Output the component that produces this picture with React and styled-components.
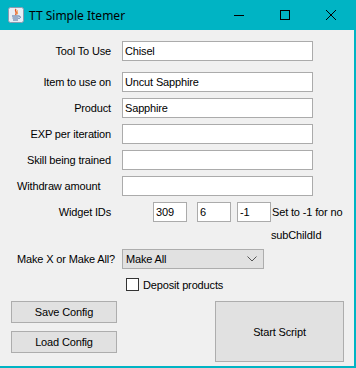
import React from 'react';
import styled, { createGlobalStyle } from 'styled-components';

const GlobalStyle = createGlobalStyle`
  html, body {
    margin: 0;
    padding: 0;
    background: #f0f0f0;
  }
`;

const Window = styled.div`
  width: 356px;
  height: 368px;
  box-sizing: border-box;
  border-right: 2px solid #00b4c4;
  border-bottom: 2px solid #00b4c4;
  background: #f0f0f0;
  font-family: "Liberation Sans", Arial, sans-serif;
  font-size: 11px;
  letter-spacing: -0.15px;
  color: #000;
  display: flex;
  flex-direction: column;
`;

const TitleBar = styled.div`
  height: 30px;
  flex-shrink: 0;
  background: #00b4c4;
  display: flex;
  align-items: center;
  padding-left: 8px;
`;

const TitleText = styled.span`
  font-family: "Noto Sans", "Liberation Sans", sans-serif;
  font-size: 12px;
  letter-spacing: 0;
  margin-left: 5px;
  color: #000;
  flex: 1;
`;

const Controls = styled.div`
  display: flex;
  height: 30px;
`;

const ControlButton = styled.div`
  width: 46px;
  height: 30px;
  display: flex;
  align-items: center;
  justify-content: center;
`;

const Content = styled.div`
  flex: 1;
  display: flex;
  flex-direction: column;
  padding-top: 11px;
`;

const Row = styled.div`
  display: flex;
  align-items: center;
  height: 20px;
  margin-top: ${(p) => p.$gap || 0}px;
`;

const Label = styled.div`
  width: ${(p) => (p.$left ? 86 : 94)}px;
  margin-left: 17px;
  margin-right: ${(p) => (p.$left ? 19 : 11)}px;
  text-align: ${(p) => (p.$left ? 'left' : 'right')};
  white-space: nowrap;
`;

const TextField = styled.div`
  box-sizing: border-box;
  width: ${(p) => p.$w || 191}px;
  height: 20px;
  background: #fff;
  border: 1px solid #ababab;
  padding-left: 2px;
  display: flex;
  align-items: center;
  margin-right: ${(p) => p.$mr || 0}px;
`;

const WidgetFields = styled.div`
  display: flex;
  align-items: center;
  margin-left: 31px;
`;

const Note = styled.span`
  margin-left: 1px;
  white-space: nowrap;
`;

const NoteLine = styled.div`
  height: 18px;
  display: flex;
  align-items: center;
  margin-top: 4px;
  padding-left: 271px;
`;

const Select = styled.div`
  box-sizing: border-box;
  width: 142px;
  height: 20px;
  background: #e1e1e1;
  border: 1px solid #adadad;
  display: flex;
  align-items: center;
  justify-content: space-between;
  padding: 0 6px 0 3px;
`;

const CheckRow = styled.label`
  display: flex;
  align-items: center;
  margin-top: 9px;
  padding-left: 126px;
  height: 13px;
`;

const CheckBox = styled.span`
  box-sizing: border-box;
  width: 13px;
  height: 13px;
  border: 1px solid #333;
  background: #fff;
  margin-right: 4px;
`;

const ButtonArea = styled.div`
  display: flex;
  justify-content: space-between;
  margin-top: 10px;
  padding-left: 11px;
  padding-right: 10px;
`;

const ButtonColumn = styled.div`
  display: flex;
  flex-direction: column;
  gap: 8px;
`;

const Button = styled.button`
  box-sizing: border-box;
  width: ${(p) => p.$w}px;
  height: ${(p) => p.$h}px;
  background: #e1e1e1;
  border: 1px solid #adadad;
  font-family: inherit;
  font-size: 11px;
  letter-spacing: inherit;
  color: #000;
  padding: 0;
  cursor: pointer;
`;

const JavaIcon = () => (
  <svg width="16" height="16" viewBox="0 0 16 16">
    <rect x="0.5" y="0.5" width="15" height="15" rx="2" fill="#e8eef5" stroke="#8a9ab0" />
    <path d="M8 2 C6 4 10 5 7.5 8" stroke="#e8561c" strokeWidth="1.4" fill="none" />
    <path d="M9.5 3.5 C8.5 5 10.5 6 9 7.5" stroke="#f08a24" strokeWidth="1" fill="none" />
    <path d="M4 9 H11 M4.5 11 H10.5 M5 13 H10" stroke="#4a6f9e" strokeWidth="1" />
    <path d="M11 9 C13 9 13 11.5 10.5 11.5" stroke="#4a6f9e" strokeWidth="0.9" fill="none" />
  </svg>
);

const App = () => {
  return (
    <Window>
      <GlobalStyle />
      <TitleBar>
        <JavaIcon />
        <TitleText>TT Simple Itemer</TitleText>
        <Controls>
          <ControlButton>
            <svg width="10" height="10" viewBox="0 0 10 10">
              <path d="M0 5.5 H10" stroke="#000" strokeWidth="1" />
            </svg>
          </ControlButton>
          <ControlButton>
            <svg width="10" height="10" viewBox="0 0 10 10">
              <rect x="0.5" y="0.5" width="9" height="9" stroke="#000" fill="none" />
            </svg>
          </ControlButton>
          <ControlButton>
            <svg width="10" height="10" viewBox="0 0 10 10">
              <path d="M0 0 L10 10 M10 0 L0 10" stroke="#000" strokeWidth="1" />
            </svg>
          </ControlButton>
        </Controls>
      </TitleBar>
      <Content>
        <Row>
          <Label>Tool To Use</Label>
          <TextField>Chisel</TextField>
        </Row>
        <Row $gap={11}>
          <Label>Item to use on</Label>
          <TextField>Uncut Sapphire</TextField>
        </Row>
        <Row $gap={6}>
          <Label>Product</Label>
          <TextField>Sapphire</TextField>
        </Row>
        <Row $gap={6}>
          <Label>EXP per iteration</Label>
          <TextField />
        </Row>
        <Row $gap={6}>
          <Label>Skill being trained</Label>
          <TextField />
        </Row>
        <Row $gap={6}>
          <Label $left>Withdraw amount</Label>
          <TextField />
        </Row>
        <Row $gap={6}>
          <Label>Widget IDs</Label>
          <WidgetFields>
            <TextField $w={34} $mr={10}>309</TextField>
            <TextField $w={34} $mr={6}>6</TextField>
            <TextField $w={34}>-1</TextField>
            <Note>Set to -1 for no</Note>
          </WidgetFields>
        </Row>
        <NoteLine>subChildId</NoteLine>
        <Row $gap={5}>
          <Label>Make X or Make All?</Label>
          <Select>
            <span>Make All</span>
            <svg width="10" height="6" viewBox="0 0 10 6">
              <path d="M0.5 0.5 L5 5 L9.5 0.5" stroke="#555" fill="none" />
            </svg>
          </Select>
        </Row>
        <CheckRow>
          <CheckBox />
          Deposit products
        </CheckRow>
        <ButtonArea>
          <ButtonColumn>
            <Button $w={106} $h={22}>Save Config</Button>
            <Button $w={106} $h={22}>Load Config</Button>
          </ButtonColumn>
          <Button $w={129} $h={61}>Start Script</Button>
        </ButtonArea>
      </Content>
    </Window>
  );
};

export default App;
